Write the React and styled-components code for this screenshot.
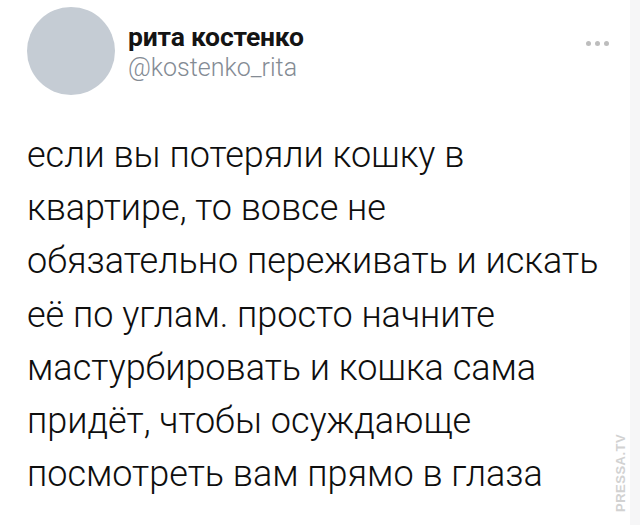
import React from 'react';
import styled, { createGlobalStyle } from 'styled-components';

const GlobalStyle = createGlobalStyle`
  html, body {
    margin: 0;
    padding: 0;
    background: #fff;
  }
  body {
    font-family: Roboto, 'Liberation Sans', sans-serif;
  }
`;

const tweetLines = [
  'если вы потеряли кошку в',
  'квартире, то вовсе не',
  'обязательно переживать и искать',
  'её по углам. просто начните',
  'мастурбировать и кошка сама',
  'придёт, чтобы осуждающе',
  'посмотреть вам прямо в глаза',
];

export default function App() {
  return (
    <>
      <GlobalStyle />
      <Page>
        <Tweet>
          <Header>
            <Avatar />
            <Author>
              <Name>рита костенко</Name>
              <Handle>@kostenko_rita</Handle>
            </Author>
            <MoreButton aria-label="more">
              <Dot />
              <Dot />
              <Dot />
            </MoreButton>
          </Header>
          <Body>
            {tweetLines.map(line => (
              <Line key={line}>{line}</Line>
            ))}
          </Body>
        </Tweet>
        <Edge />
        <Watermark>PRESSA.TV</Watermark>
      </Page>
    </>
  );
}

const Page = styled.div`
  position: relative;
  width: 640px;
  height: 525px;
  display: flex;
  overflow: hidden;
  background: #fff;
`;

const Tweet = styled.article`
  flex: 1;
  padding: 7px 0 0 27px;
`;

const Edge = styled.div`
  width: 10px;
  background: #f6f6f7;
`;

const Header = styled.header`
  display: flex;
  align-items: flex-start;
`;

const Avatar = styled.div`
  width: 88px;
  height: 88px;
  border-radius: 50%;
  background: #c5ccd4;
  flex-shrink: 0;
`;

const Author = styled.div`
  display: flex;
  flex-direction: column;
  margin: 14px 0 0 13px;
  flex: 1;
`;

const Name = styled.div`
  font-size: 26.5px;
  font-weight: 700;
  color: #141414;
  line-height: 32px;
  letter-spacing: -0.2px;
`;

const Handle = styled.div`
  font-size: 25px;
  font-weight: 300;
  color: #848b94;
  line-height: 30px;
`;

const MoreButton = styled.div`
  display: flex;
  gap: 4px;
  margin: 34px 21px 0 0;
`;

const Dot = styled.span`
  width: 5px;
  height: 5px;
  border-radius: 50%;
  background: #bdbdbd;
`;

const Body = styled.div`
  margin-top: 34px;
  font-size: 36px;
  line-height: 53.2px;
  color: #0e0e0e;
  font-weight: 300;
`;

const Line = styled.div`
  white-space: nowrap;
`;

const Watermark = styled.div`
  position: absolute;
  right: 12px;
  bottom: 13px;
  transform-origin: right bottom;
  transform: rotate(-90deg) translateX(100%);
  font-family: 'Liberation Sans', Arial, sans-serif;
  font-weight: 700;
  font-size: 13px;
  letter-spacing: 0.5px;
  color: #d2d2d2;
`;
